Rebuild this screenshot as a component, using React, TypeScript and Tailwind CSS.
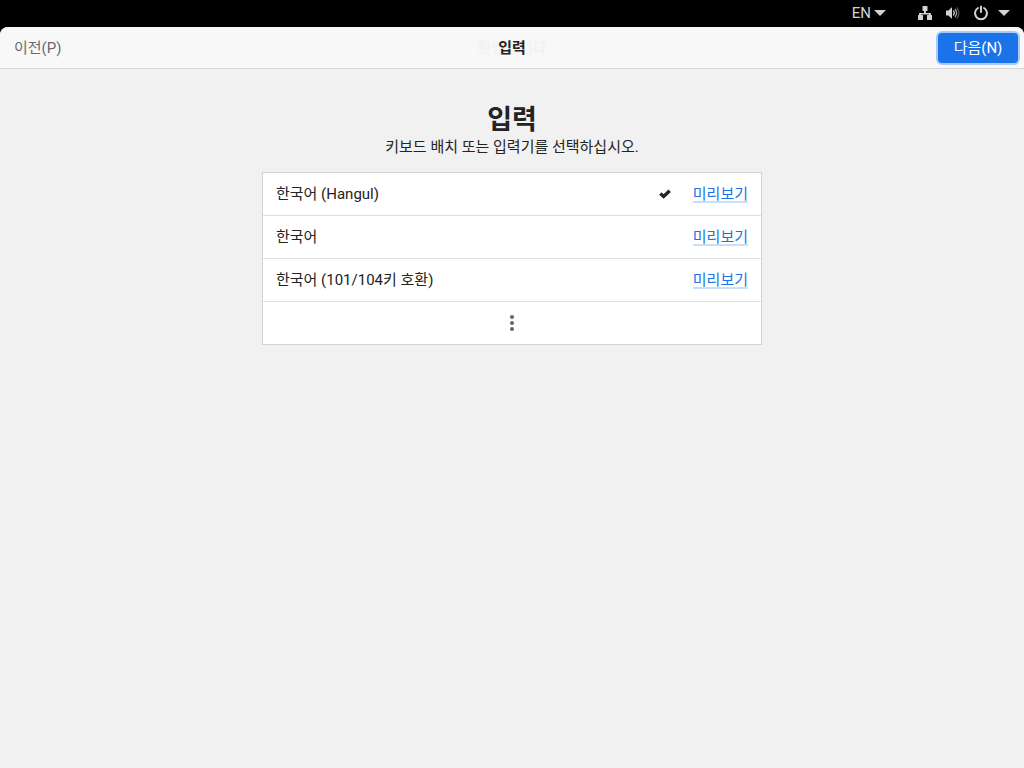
import React from "react";

type Layout = { name: string; selected?: boolean };

const layouts: Layout[] = [
  { name: "한국어 (Hangul)", selected: true },
  { name: "한국어" },
  { name: "한국어 (101/104키 호환)" },
];

function CaretDown() {
  return (
    <svg width="12" height="6" viewBox="0 0 12 6" fill="currentColor" aria-hidden="true">
      <path d="M0 0h12L6 6z" />
    </svg>
  );
}

function NetworkIcon() {
  return (
    <svg width="16" height="16" viewBox="0 0 16 16" fill="currentColor" aria-hidden="true">
      <path d="M6 1h4q.5 0 .5.5v4q0 .5-.5.5H9v2h4.5q.5 0 .5.5V10h.5q.5 0 .5.5v4q0 .5-.5.5h-4q-.5 0-.5-.5v-4q0-.5.5-.5H12V9.500H4V10h1.500q.5 0 .5.5v4q0 .5-.5.5h-4q-.5 0-.5-.5v-4q0-.5.5-.5H2V8.500q0-.5.5-.5H7V6H6q-.5 0-.5-.5v-4Q5.500 1 6 1z" />
    </svg>
  );
}

function VolumeIcon() {
  return (
    <svg width="16" height="16" viewBox="0 0 16 16" aria-hidden="true">
      <path d="M1 5.500h2.500L6.500 2.500H7v11h-.5L3.500 10.500H1z" fill="currentColor" />
      <g fill="none" stroke="currentColor" strokeLinecap="round">
        <path d="M8.600 6q1.500 2 0 4" strokeWidth="1.300" />
        <path d="M10.300 4.300q2.600 3.700 0 7.400" strokeWidth="1.300" opacity=".8" />
        <path d="M12.200 2.800q3.400 5.200 0 10.400" strokeWidth="1.200" opacity=".4" />
      </g>
    </svg>
  );
}

function PowerIcon() {
  return (
    <svg width="16" height="16" viewBox="0 0 16 16" fill="none" stroke="currentColor" strokeWidth="2" strokeLinecap="round" aria-hidden="true">
      <path d="M8 1.500V7M5 3a6 6 0 1 0 6 0" />
    </svg>
  );
}

function CheckIcon() {
  return (
    <svg width="12" height="10" viewBox="0 0 12 10" fill="none" stroke="#222628" strokeWidth="3.400" role="img" aria-label="선택됨">
      <path d="M1.300 4.500 4.600 7.500 10.700 1.700" />
    </svg>
  );
}

export default function App() {
  return (
    <div className="flex min-h-screen flex-col bg-black font-['Roboto','Noto_Sans_CJK_KR',sans-serif] text-[15px] font-[390] leading-[22px] text-[#232323]">
      <nav className="flex h-[27px] items-center justify-end pb-0.5 pr-[14px] text-[#d2d2d2]">
        <button type="button" className="mr-[31px] flex items-center gap-[3px] font-normal">
          EN
          <CaretDown />
        </button>
        <button type="button" aria-label="시스템 메뉴" className="flex items-center gap-3">
          <NetworkIcon />
          <VolumeIcon />
          <PowerIcon />
          <span className="-ml-[3px]">
            <CaretDown />
          </span>
        </button>
      </nav>
      <div className="flex flex-1 flex-col overflow-hidden rounded-t-lg bg-[#f1f1f1]">
        <header className="grid h-[42px] grid-cols-[1fr_auto_1fr] items-center border-b border-[#d6d6d6] bg-[#f8f8f8] px-[6px]">
          <button type="button" className="justify-self-start px-2 text-[#6a6a6a]">
            이전(P)
          </button>
          <div className="grid place-items-center font-bold">
            <span aria-hidden="true" className="col-start-1 row-start-1 text-[#f2f2f2]">
              환영합니다
            </span>
            <span className="col-start-1 row-start-1">입력</span>
          </div>
          <button type="button" className="flex h-[30px] w-20 items-center justify-center justify-self-end rounded-[4px] bg-[#1a73e8] text-white ring-2 ring-[#a9caf5]">
            다음(N)
          </button>
        </header>
        <main className="mx-auto flex w-full max-w-[500px] flex-col items-center pt-[35px]">
          <h1 className="text-[27px] font-bold leading-[32px]">입력</h1>
          <p>키보드 배치 또는 입력기를 선택하십시오.</p>
          <ul className="mt-[14px] w-full divide-y divide-[#dedede] border border-[#d3d3d3] bg-white">
            {layouts.map((layout) => (
              <li key={layout.name} className="flex h-[43px] items-center px-[13px]">
                <span className="flex-1">{layout.name}</span>
                {layout.selected && (
                  <span className="mr-[22px]">
                    <CheckIcon />
                  </span>
                )}
                <a href="#preview" className="h-[17px] border-b-2 border-[#c9def9] leading-[16px] text-[#1a73e8]">
                  미리보기
                </a>
              </li>
            ))}
            <li className="h-[42px]">
              <button type="button" aria-label="더 보기" className="flex h-full w-full items-center justify-center">
                <svg width="4" height="16" viewBox="0 0 4 16" fill="#666" aria-hidden="true">
                  <circle cx="2" cy="2" r="2" />
                  <circle cx="2" cy="8" r="2" />
                  <circle cx="2" cy="14" r="2" />
                </svg>
              </button>
            </li>
          </ul>
        </main>
      </div>
    </div>
  );
}
